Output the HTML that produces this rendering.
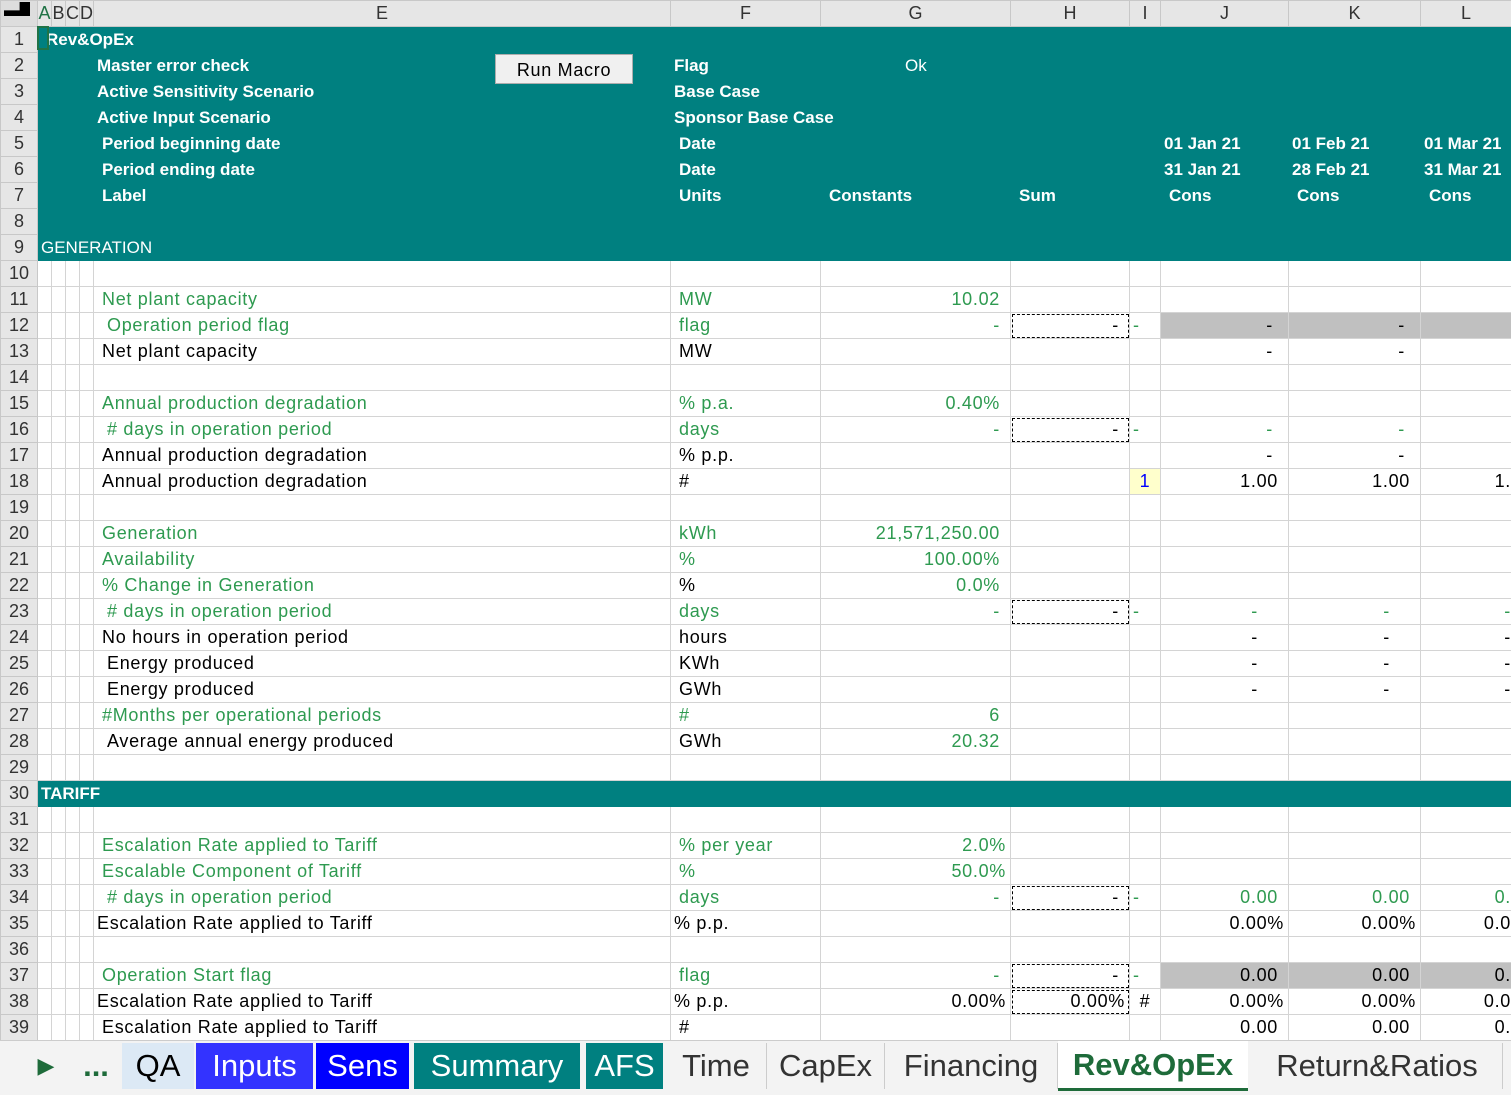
<!DOCTYPE html><html><head><meta charset="utf-8"><style>
body{margin:0;width:1511px;height:1094px;overflow:hidden;background:#fff;font-family:"Liberation Sans",sans-serif;font-size:18px;letter-spacing:0.7px;position:relative}
table{border-collapse:collapse;table-layout:fixed;position:absolute;left:0;top:0;width:1511px}
td{height:25px;border:1px solid #d4d4d4;padding:0 3px;white-space:nowrap;overflow:visible;line-height:25px}
tr.h td{background:#e6e6e6;color:#333;text-align:center;height:24px;font-size:18px;letter-spacing:0;border-color:#c8c8c8;padding:0}
td.n{background:#e6e6e6;color:#333;text-align:center;font-size:18px;letter-spacing:0;border-color:#c8c8c8;padding:0}
tr.t td:not(.n){background:#008080;color:#fff;font-weight:bold;font-size:17px;letter-spacing:0;border-color:#008080}
.g{color:#2e9a50}.r{text-align:right;padding-right:10px}.p{padding-right:4px}.gr{background:#c0c0c0}
.d{outline:1px dashed #000;outline-offset:-2px}
.tabs{position:absolute;left:0;top:1040px;width:1511px;height:54px;background:#f3f3f3;border-top:1px solid #ccc;letter-spacing:0}
.tab{position:absolute;top:2px;height:46px;line-height:46px;font-size:31px;color:#333;text-align:center}
</style></head><body>
<table>
<colgroup><col style="width:37px"><col style="width:14px"><col style="width:14px"><col style="width:14px"><col style="width:14px"><col style="width:577px"><col style="width:150px"><col style="width:190px"><col style="width:119px"><col style="width:31px"><col style="width:128px"><col style="width:132px"><col style="width:91px"></colgroup>
<tr class="h"><td style="background:#ddd"></td><td style="color:#217346">A</td><td>B</td><td>C</td><td>D</td><td>E</td><td>F</td><td>G</td><td>H</td><td>I</td><td>J</td><td>K</td><td>L</td></tr>
<tr class="t"><td class="n">1</td><td colspan="5" style="padding-left:8px">Rev&amp;OpEx</td><td></td><td></td><td></td><td></td><td></td><td></td><td></td></tr>
<tr class="t"><td class="n">2</td><td></td><td></td><td></td><td></td><td>Master error check</td><td>Flag</td><td style="font-weight:normal;padding-left:84px">Ok</td><td></td><td></td><td></td><td></td><td></td></tr>
<tr class="t"><td class="n">3</td><td></td><td></td><td></td><td></td><td>Active Sensitivity Scenario</td><td>Base Case</td><td></td><td></td><td></td><td></td><td></td><td></td></tr>
<tr class="t"><td class="n">4</td><td></td><td></td><td></td><td></td><td>Active Input Scenario</td><td>Sponsor Base Case</td><td></td><td></td><td></td><td></td><td></td><td></td></tr>
<tr class="t"><td class="n">5</td><td></td><td></td><td></td><td></td><td style="padding-left:8px">Period beginning date</td><td style="padding-left:8px">Date</td><td></td><td></td><td></td><td>01 Jan 21</td><td>01 Feb 21</td><td>01 Mar 21</td></tr>
<tr class="t"><td class="n">6</td><td></td><td></td><td></td><td></td><td style="padding-left:8px">Period ending date</td><td style="padding-left:8px">Date</td><td></td><td></td><td></td><td>31 Jan 21</td><td>28 Feb 21</td><td>31 Mar 21</td></tr>
<tr class="t"><td class="n">7</td><td></td><td></td><td></td><td></td><td style="padding-left:8px">Label</td><td style="padding-left:8px">Units</td><td style="padding-left:8px">Constants</td><td style="padding-left:8px">Sum</td><td></td><td style="padding-left:8px">Cons</td><td style="padding-left:8px">Cons</td><td style="padding-left:8px">Cons</td></tr>
<tr class="t"><td class="n">8</td><td></td><td></td><td></td><td></td><td></td><td></td><td></td><td></td><td></td><td></td><td></td><td></td></tr>
<tr class="t"><td class="n">9</td><td colspan="5" style="font-weight:normal">GENERATION</td><td></td><td></td><td></td><td></td><td></td><td></td><td></td></tr>
<tr><td class="n">10</td><td></td><td></td><td></td><td></td><td></td><td></td><td></td><td></td><td></td><td></td><td></td><td></td></tr>
<tr><td class="n">11</td><td></td><td></td><td></td><td></td><td class="g" style="padding-left:8px">Net plant capacity</td><td class="g" style="padding-left:8px">MW</td><td class="g r">10.02</td><td></td><td></td><td></td><td></td><td></td></tr>
<tr><td class="n">12</td><td></td><td></td><td></td><td></td><td class="g" style="padding-left:13px">Operation period flag</td><td class="g" style="padding-left:8px">flag</td><td class="g r">-</td><td class="r d">-</td><td class="g">-</td><td class="r gr" style="padding-right:15px">-</td><td class="r gr" style="padding-right:15px">-</td><td class="gr"></td></tr>
<tr><td class="n">13</td><td></td><td></td><td></td><td></td><td style="padding-left:8px">Net plant capacity</td><td style="padding-left:8px">MW</td><td></td><td></td><td></td><td class="r" style="padding-right:15px">-</td><td class="r" style="padding-right:15px">-</td><td></td></tr>
<tr><td class="n">14</td><td></td><td></td><td></td><td></td><td></td><td></td><td></td><td></td><td></td><td></td><td></td><td></td></tr>
<tr><td class="n">15</td><td></td><td></td><td></td><td></td><td class="g" style="padding-left:8px">Annual production degradation</td><td class="g" style="padding-left:8px">% p.a.</td><td class="g r">0.40%</td><td></td><td></td><td></td><td></td><td></td></tr>
<tr><td class="n">16</td><td></td><td></td><td></td><td></td><td class="g" style="padding-left:13px"># days in operation period</td><td class="g" style="padding-left:8px">days</td><td class="g r">-</td><td class="r d">-</td><td class="g">-</td><td class="g r" style="padding-right:15px">-</td><td class="g r" style="padding-right:15px">-</td><td></td></tr>
<tr><td class="n">17</td><td></td><td></td><td></td><td></td><td style="padding-left:8px">Annual production degradation</td><td style="padding-left:8px">% p.p.</td><td></td><td></td><td></td><td class="r" style="padding-right:15px">-</td><td class="r" style="padding-right:15px">-</td><td></td></tr>
<tr><td class="n">18</td><td></td><td></td><td></td><td></td><td style="padding-left:8px">Annual production degradation</td><td style="padding-left:8px">#</td><td></td><td></td><td style="background:#ffffcc;color:#00f;text-align:center">1</td><td class="r">1.00</td><td class="r">1.00</td><td class="r" style="padding-right:0">1.</td></tr>
<tr><td class="n">19</td><td></td><td></td><td></td><td></td><td></td><td></td><td></td><td></td><td></td><td></td><td></td><td></td></tr>
<tr><td class="n">20</td><td></td><td></td><td></td><td></td><td class="g" style="padding-left:8px">Generation</td><td class="g" style="padding-left:8px">kWh</td><td class="g r">21,571,250.00</td><td></td><td></td><td></td><td></td><td></td></tr>
<tr><td class="n">21</td><td></td><td></td><td></td><td></td><td class="g" style="padding-left:8px">Availability</td><td class="g" style="padding-left:8px">%</td><td class="g r">100.00%</td><td></td><td></td><td></td><td></td><td></td></tr>
<tr><td class="n">22</td><td></td><td></td><td></td><td></td><td class="g" style="padding-left:8px">% Change in Generation</td><td style="padding-left:8px">%</td><td class="g r">0.0%</td><td></td><td></td><td></td><td></td><td></td></tr>
<tr><td class="n">23</td><td></td><td></td><td></td><td></td><td class="g" style="padding-left:13px"># days in operation period</td><td class="g" style="padding-left:8px">days</td><td class="g r">-</td><td class="r d">-</td><td class="g">-</td><td class="g r" style="padding-right:30px">-</td><td class="g r" style="padding-right:30px">-</td><td class="g r" style="padding-right:0">-</td></tr>
<tr><td class="n">24</td><td></td><td></td><td></td><td></td><td style="padding-left:8px">No hours in operation period</td><td style="padding-left:8px">hours</td><td></td><td></td><td></td><td class="r" style="padding-right:30px">-</td><td class="r" style="padding-right:30px">-</td><td class="r" style="padding-right:0">-</td></tr>
<tr><td class="n">25</td><td></td><td></td><td></td><td></td><td style="padding-left:13px">Energy produced</td><td style="padding-left:8px">KWh</td><td></td><td></td><td></td><td class="r" style="padding-right:30px">-</td><td class="r" style="padding-right:30px">-</td><td class="r" style="padding-right:0">-</td></tr>
<tr><td class="n">26</td><td></td><td></td><td></td><td></td><td style="padding-left:13px">Energy produced</td><td style="padding-left:8px">GWh</td><td></td><td></td><td></td><td class="r" style="padding-right:30px">-</td><td class="r" style="padding-right:30px">-</td><td class="r" style="padding-right:0">-</td></tr>
<tr><td class="n">27</td><td></td><td></td><td></td><td></td><td class="g" style="padding-left:8px">#Months per operational periods</td><td class="g" style="padding-left:8px">#</td><td class="g r">6</td><td></td><td></td><td></td><td></td><td></td></tr>
<tr><td class="n">28</td><td></td><td></td><td></td><td></td><td style="padding-left:13px">Average annual energy produced</td><td style="padding-left:8px">GWh</td><td class="g r">20.32</td><td></td><td></td><td></td><td></td><td></td></tr>
<tr><td class="n">29</td><td></td><td></td><td></td><td></td><td></td><td></td><td></td><td></td><td></td><td></td><td></td><td></td></tr>
<tr class="t"><td class="n">30</td><td colspan="5">TARIFF</td><td></td><td></td><td></td><td></td><td></td><td></td><td></td></tr>
<tr><td class="n">31</td><td></td><td></td><td></td><td></td><td></td><td></td><td></td><td></td><td></td><td></td><td></td><td></td></tr>
<tr><td class="n">32</td><td></td><td></td><td></td><td></td><td class="g" style="padding-left:8px">Escalation Rate applied to Tariff</td><td class="g" style="padding-left:8px">% per year</td><td class="g r p">2.0%</td><td></td><td></td><td></td><td></td><td></td></tr>
<tr><td class="n">33</td><td></td><td></td><td></td><td></td><td class="g" style="padding-left:8px">Escalable Component of Tariff</td><td class="g" style="padding-left:8px">%</td><td class="g r p">50.0%</td><td></td><td></td><td></td><td></td><td></td></tr>
<tr><td class="n">34</td><td></td><td></td><td></td><td></td><td class="g" style="padding-left:13px"># days in operation period</td><td class="g" style="padding-left:8px">days</td><td class="g r">-</td><td class="r d">-</td><td class="g">-</td><td class="g r">0.00</td><td class="g r">0.00</td><td class="g r" style="padding-right:0">0.</td></tr>
<tr><td class="n">35</td><td></td><td></td><td></td><td></td><td>Escalation Rate applied to Tariff</td><td>% p.p.</td><td></td><td></td><td></td><td class="r p">0.00%</td><td class="r p">0.00%</td><td class="r" style="padding-right:0">0.0</td></tr>
<tr><td class="n">36</td><td></td><td></td><td></td><td></td><td></td><td></td><td></td><td></td><td></td><td></td><td></td><td></td></tr>
<tr><td class="n">37</td><td></td><td></td><td></td><td></td><td class="g" style="padding-left:8px">Operation Start flag</td><td class="g" style="padding-left:8px">flag</td><td class="g r">-</td><td class="r d">-</td><td class="g">-</td><td class="r gr">0.00</td><td class="r gr">0.00</td><td class="r gr" style="padding-right:0">0.</td></tr>
<tr><td class="n">38</td><td></td><td></td><td></td><td></td><td>Escalation Rate applied to Tariff</td><td>% p.p.</td><td class="r p">0.00%</td><td class="r d p">0.00%</td><td style="text-align:center">#</td><td class="r p">0.00%</td><td class="r p">0.00%</td><td class="r" style="padding-right:0">0.0</td></tr>
<tr><td class="n">39</td><td></td><td></td><td></td><td></td><td style="padding-left:8px">Escalation Rate applied to Tariff</td><td style="padding-left:8px">#</td><td></td><td></td><td></td><td class="r">0.00</td><td class="r">0.00</td><td class="r" style="padding-right:0">0.</td></tr>
</table>
<div style="position:absolute;left:37px;top:26px;width:12px;height:24px;border:2px solid #217346;box-sizing:border-box"></div>
<div style="position:absolute;left:495px;top:54px;width:138px;height:30px;background:#f0f0f0;border:1px solid #adadad;box-sizing:border-box;text-align:center;line-height:30px;font-size:18px;color:#000">Run Macro</div>
<div style="position:absolute;left:0;top:0;width:30px;height:20px"><div style="position:absolute;left:4px;top:2px;width:26px;height:14px;background:#000;clip-path:polygon(0 60%,60% 60%,60% 0,100% 0,100% 100%,0 100%)"></div></div>
<div class="tabs">
<div class="tab" style="left:36px;width:20px;color:#1e6b3a;font-size:22px">&#9654;</div>
<div class="tab" style="left:76px;width:40px;color:#1e6b3a;font-weight:bold">...</div>
<div class="tab" style="left:122px;width:72px;background:#dce9f5;color:#000">QA</div>
<div class="tab" style="left:196px;width:117px;background:#3333ff;color:#fff">Inputs</div>
<div class="tab" style="left:316px;width:93px;background:#0000ff;color:#fff">Sens</div>
<div class="tab" style="left:414px;width:166px;background:#008080;color:#fff">Summary</div>
<div class="tab" style="left:586px;width:77px;background:#008080;color:#fff">AFS</div>
<div class="tab" style="left:666px;width:100px;border-right:1px solid #ccc">Time</div>
<div class="tab" style="left:767px;width:117px;border-right:1px solid #ccc">CapEx</div>
<div class="tab" style="left:885px;width:172px;border-right:1px solid #ccc">Financing</div>
<div class="tab" style="left:1058px;width:190px;top:0;height:50px;line-height:48px;background:#fff;color:#1e6b3a;font-weight:bold;border-bottom:3px solid #1e6b3a;box-sizing:border-box">Rev&amp;OpEx</div>
<div class="tab" style="left:1252px;width:250px;border-right:1px solid #ccc">Return&amp;Ratios</div>
</div>
</body></html>
